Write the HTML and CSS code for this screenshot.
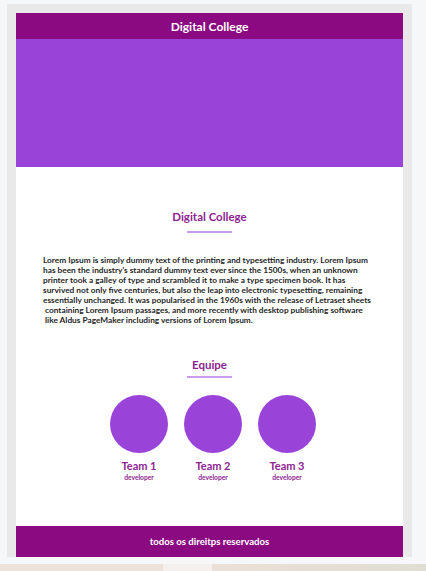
FILE: index.html
```html
<!DOCTYPE html>
<html lang="pt">
<head>
<meta charset="utf-8">
<title>Digital College</title>
<link rel="stylesheet" href="styles.css">
</head>
<body>
<div class="frame">
  <header class="topbar">Digital College</header>
  <div class="hero"></div>
  <main class="content">
    <h2 class="title">Digital College</h2>
    <span class="rule"></span>
    <p class="lorem">Lorem Ipsum is simply dummy text of the printing and typesetting industry. Lorem Ipsum<br>has been the industry's standard dummy text ever since the 1500s, when an unknown<br>printer took a galley of type and scrambled it to make a type specimen book. It has<br>survived not only five centuries, but also the leap into electronic typesetting, remaining<br>essentially unchanged. It was popularised in the 1960s with the release of Letraset sheets<br>&nbsp;containing Lorem Ipsum passages, and more recently with desktop publishing software<br>&nbsp;like Aldus PageMaker including versions of Lorem Ipsum.</p>
    <h2 class="title title-team">Equipe</h2>
    <span class="rule rule-team"></span>
    <div class="team">
      <div class="member"><div class="avatar"></div><div class="name">Team 1</div><div class="role">developer</div></div>
      <div class="member"><div class="avatar"></div><div class="name">Team 2</div><div class="role">developer</div></div>
      <div class="member"><div class="avatar"></div><div class="name">Team 3</div><div class="role">developer</div></div>
    </div>
  </main>
  <footer class="footer">todos os direitps reservados</footer>
</div>
<div class="strip"></div>
</body>
</html>
```

FILE: styles.css
```css
* { box-sizing: border-box; }
html, body { margin: 0; padding: 0; }
body {
  background: #f6f7f9;
  font-family: "Lato", "Liberation Sans", sans-serif;
  width: 426px;
  height: 571px;
  overflow: hidden;
  display: flex;
  flex-direction: column;
}
.frame {
  margin: 4px 0 0 7px;
  width: 405px;
  padding: 9px 9px 0 9px;
  background: #e9e9e9;
  display: flex;
  flex-direction: column;
}
.topbar {
  height: 26px;
  background: #8b0a82;
  color: #fff;
  font-weight: 700;
  font-size: 12px;
  display: flex;
  align-items: center;
  justify-content: center;
}
.hero {
  height: 128px;
  background: #9a43d8;
}
.content {
  height: 359px;
  background: #fff;
  display: flex;
  flex-direction: column;
  align-items: center;
  padding-top: 43px;
}
.title {
  margin: 0;
  font-size: 11.5px;
  line-height: 14px;
  font-weight: 700;
  color: #8e2490;
}
.rule {
  display: block;
  width: 45px;
  height: 2px;
  margin-top: 7px;
  background: #c99bea;
}
.lorem {
  align-self: stretch;
  margin: 22px 0 0;
  padding: 0 0 0 27px;
  font-size: 8.3px;
  line-height: 10px;
  font-weight: 700;
  color: #262626;
  white-space: nowrap;
}
.title-team { margin-top: 33px; }
.rule-team { margin-top: 4px; }
.team {
  display: flex;
  gap: 16px;
  margin-top: 17px;
  padding-left: 7px;
}
.member {
  width: 58px;
  display: flex;
  flex-direction: column;
  align-items: center;
}
.avatar {
  width: 58px;
  height: 58px;
  border-radius: 50%;
  background: #9a43d8;
}
.name {
  margin-top: 6px;
  font-size: 11px;
  line-height: 13px;
  font-weight: 700;
  color: #8e2490;
  white-space: nowrap;
}
.role {
  margin-top: 1px;
  font-size: 6.7px;
  line-height: 8px;
  font-weight: 700;
  color: #8e2490;
}
.footer {
  height: 31px;
  background: #8b0a82;
  color: #fff;
  font-size: 9.6px;
  font-weight: 700;
  display: flex;
  align-items: center;
  justify-content: center;
}
.strip {
  margin-top: 7px;
  height: 7px;
  background: linear-gradient(90deg, #ece2d9 0, #ece2d9 163px, #f5f0ed 163px, #f5f0ed 212px, #ebe0d7 212px, #e0ddd2 100%);
}
```
